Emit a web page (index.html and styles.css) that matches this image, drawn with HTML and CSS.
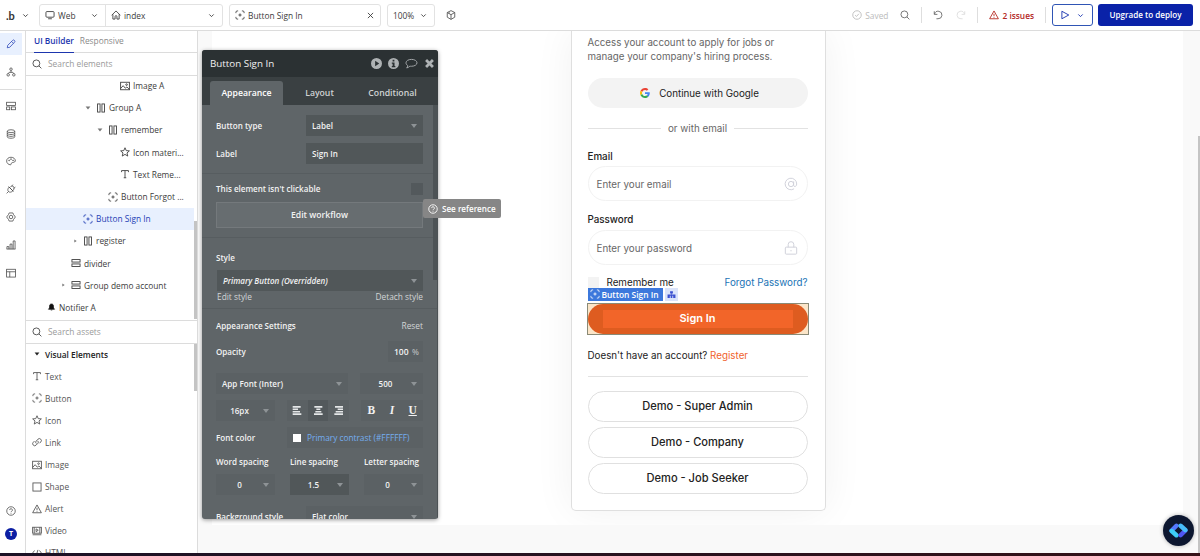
FILE: index.html
```html
<!DOCTYPE html>
<html lang="en">
<head>
  <meta charset="UTF-8">
  <title>index | Editor</title>
  <link rel="stylesheet" href="styles.css">
</head>

<body>
  <!-- Icon sprite -->
  <svg class="sprite">
    <symbol id="i-chevron" viewBox="0 0 16 16"><path d="M3 5.5l5 5 5-5"/></symbol>
    <symbol id="i-screen" viewBox="0 0 16 16"><rect x="1.5" y="2.5" width="13" height="9" rx="1.5"/><path d="M5 14h6"/></symbol>
    <symbol id="i-home" viewBox="0 0 16 16"><path d="M1 8.5L8 1.5l7 7M3 7v7.5h3.5v-4a1.5 1.5 0 0 1 3 0v4H13V7"/></symbol>
    <symbol id="i-button" viewBox="0 0 16 16"><path d="M1.5 5V3.500a2 2 0 0 1 2-2H5M11 1.500h1.500a2 2 0 0 1 2 2V5M14.500 11v1.500a2 2 0 0 1-2 2H11M5 14.500H3.500a2 2 0 0 1-2-2V11M8 5.500v5M5.500 8h5"/></symbol>
    <symbol id="i-close" viewBox="0 0 16 16"><path d="M2 2l12 12M14 2L2 14"/></symbol>
    <symbol id="i-cube" viewBox="0 0 16 16"><path d="M8 1l6 3v7.500L8 15l-6-3.500V4zM2 4l6 3.500L14 4M8 7.500V15M5 5.700V3.500"/></symbol>
    <symbol id="i-check" viewBox="0 0 16 16"><circle cx="8" cy="8" r="6.800"/><path d="M5 8.300l2.200 2L11 6"/></symbol>
    <symbol id="i-search" viewBox="0 0 16 16"><circle cx="7" cy="7" r="5.500"/><path d="M11 11l4 4"/></symbol>
    <symbol id="i-undo" viewBox="0 0 16 16"><path d="M2 2v5h5M2.500 6.500A6 6 0 1 1 8 14H5.500"/></symbol>
    <symbol id="i-redo" viewBox="0 0 16 16"><path d="M14 2v5H9M13.500 6.500A6 6 0 1 0 8 14h2.500"/></symbol>
    <symbol id="i-alert" viewBox="0 0 16 16"><path d="M8 1.500L15 14H1zM8 6v4M8 11.500v1"/></symbol>
    <symbol id="i-play" viewBox="0 0 16 16"><path d="M3 2l11 6-11 6z"/></symbol>
    <symbol id="i-pencil" viewBox="0 0 16 16"><path d="M2 14l.8-4L10.500 2.300a2 2 0 0 1 3 0 2 2 0 0 1 0 3L6 13.200zM9 4l3 3"/></symbol>
    <symbol id="i-tree" viewBox="0 0 16 16"><circle cx="8" cy="3.500" r="2"/><circle cx="3.500" cy="12.500" r="2"/><circle cx="12.500" cy="12.500" r="2"/><path d="M8 5.500V9M3.500 10.500L5 8.500h6l1.500 2"/></symbol>
    <symbol id="i-blocks" viewBox="0 0 16 16"><rect x="1" y="2" width="14" height="5"/><rect x="1" y="9.500" width="5" height="4.500"/><rect x="8.500" y="9.500" width="6.500" height="4.500"/></symbol>
    <symbol id="i-data" viewBox="0 0 16 16"><ellipse cx="8" cy="3.500" rx="6" ry="2.300"/><path d="M2 3.500v9c0 1.300 2.700 2.300 6 2.300s6-1 6-2.300v-9M2 6.500c0 1.300 2.700 2.300 6 2.300s6-1 6-2.300M2 9.500c0 1.300 2.700 2.300 6 2.300s6-1 6-2.300"/></symbol>
    <symbol id="i-palette" viewBox="0 0 16 16"><path d="M8 2C4 2 1 4.500 1 8s3 6 6 6c2 0 1-2 2-3s5 0 6-3c0-3.500-3-6-7-6z"/><circle cx="5" cy="7" r=".7"/><circle cx="8" cy="5" r=".7"/><circle cx="11.300" cy="7" r=".7"/></symbol>
    <symbol id="i-plug" viewBox="0 0 16 16"><path d="M1 15l3-3M4 12c-2-2-1-5 1-7l6 6c-2 2-5 3-7 1zM4 4l8 8M7 4.500C9 3 12 3 12.500 5s0 4-1 5.500M9 3.500L11 1M12.500 7L15 5"/></symbol>
    <symbol id="i-gear" viewBox="0 0 16 16"><path d="M5 1.500h6l1 2.500 3 4-3 4-1 2.500H5L4 12 1 8l3-4z"/><circle cx="8" cy="8" r="2.800"/></symbol>
    <symbol id="i-chart" viewBox="0 0 16 16"><path d="M1.500 14.500v-4h3v4M6.500 14.500V6.500h3v8M11.500 14.500v-13h3v13M1 14.500h14"/></symbol>
    <symbol id="i-layout" viewBox="0 0 16 16"><rect x="1" y="2" width="14" height="12.500"/><path d="M1 6h14M6 6v8.500"/></symbol>
    <symbol id="i-help" viewBox="0 0 16 16"><circle cx="8" cy="8" r="6.800"/><path d="M5.800 6.500a2.200 2.200 0 1 1 3.200 2c-.8.400-1 .8-1 1.500M8 11.300v1"/></symbol>
    <symbol id="i-image" viewBox="0 0 16 16"><rect x="1" y="2" width="14" height="12"/><path d="M1 12l4-4.500 3.500 4 2.500-2 4 4"/><circle cx="10.500" cy="5.800" r="1.300"/></symbol>
    <symbol id="i-cols" viewBox="0 0 16 16"><rect x="2.500" y="1.500" width="4" height="13"/><rect x="9.500" y="1.500" width="4" height="13"/></symbol>
    <symbol id="i-rows" viewBox="0 0 16 16"><rect x="1.500" y="2.500" width="13" height="4"/><rect x="1.500" y="9.500" width="13" height="4"/></symbol>
    <symbol id="i-star" viewBox="0 0 16 16"><path d="M8 1.200l2 4.600 5 .4-3.800 3.300L12.400 14.500 8 11.800l-4.400 2.700 1.200-5L1 6.200l5-.4z"/></symbol>
    <symbol id="i-text" viewBox="0 0 16 16"><path d="M2.500 5V2.500h11V5M8 2.500V14M6 14h4"/></symbol>
    <symbol id="i-bell" viewBox="0 0 16 16"><path d="M8 2c3 0 4 2 4 5v3l2 2.500H2L4 10V7c0-3 1-5 4-5zM6.500 14h3" fill="currentColor"/></symbol>
    <symbol id="i-link" viewBox="0 0 16 16"><path d="M7 10.500a3 3 0 0 1 0-4.500l2.500-2.500a3 3 0 0 1 4.500 4.500L12 10M9 6a3 3 0 0 1 0 4.500L6.500 13A3 3 0 0 1 2 8.500L4 6.500"/></symbol>
    <symbol id="i-shape" viewBox="0 0 16 16"><rect x="1.500" y="1.500" width="13" height="13"/></symbol>
    <symbol id="i-video" viewBox="0 0 16 16"><rect x="1" y="2" width="14" height="9.500"/><path d="M6.500 4.500l3.500 2.300-3.500 2.300zM1 14h14M3.500 2v9.500M12.500 2v9.500"/></symbol>
    <symbol id="i-code" viewBox="0 0 16 16"><path d="M4 4L1 8l3 4M12 4l3 4-3 4M9.500 3l-3 10"/></symbol>
    <symbol id="i-left" viewBox="0 0 16 16"><path d="M1 2.500h12M1 6.200h8M1 9.800h11M1 13.500h13"/></symbol>
    <symbol id="i-center" viewBox="0 0 16 16"><path d="M2 2.500h12M5 6.200h6M3.500 9.800h9M1.500 13.500h13"/></symbol>
    <symbol id="i-right" viewBox="0 0 16 16"><path d="M3 2.500h12M7 6.200h8M4 9.800h11M2 13.500h13"/></symbol>
  </svg>

  <!-- Top bar -->
  <div class="topbar">
    <div class="logo"><span>.b</span><svg class="icon tiny"><use href="#i-chevron"/></svg></div>
    <div class="picker">
      <div class="picker-web"><svg class="icon"><use href="#i-screen"/></svg><span>Web</span><svg class="icon tiny"><use href="#i-chevron"/></svg></div>
      <div class="picker-page"><svg class="icon"><use href="#i-home"/></svg><span>index</span><svg class="icon tiny"><use href="#i-chevron"/></svg></div>
    </div>
    <div class="picker picker-element"><svg class="icon"><use href="#i-button"/></svg><span>Button Sign In</span><svg class="icon tiny"><use href="#i-close"/></svg></div>
    <div class="picker picker-zoom"><span>100%</span><svg class="icon tiny"><use href="#i-chevron"/></svg></div>
    <svg class="icon cube"><use href="#i-cube"/></svg>
    <div class="top-right">
      <div class="saved"><svg class="icon"><use href="#i-check"/></svg>Saved</div>
      <svg class="icon"><use href="#i-search"/></svg>
      <div class="sep"></div>
      <svg class="icon"><use href="#i-undo"/></svg>
      <svg class="icon faded"><use href="#i-redo"/></svg>
      <div class="sep"></div>
      <div class="issues"><svg class="icon"><use href="#i-alert"/></svg>2 issues</div>
      <div class="sep"></div>
      <div class="preview"><svg class="icon"><use href="#i-play"/></svg><svg class="icon tiny"><use href="#i-chevron"/></svg></div>
      <div class="upgrade">Upgrade to deploy</div>
    </div>
  </div>

  <div class="main">
    <!-- Left icon rail -->
    <div class="rail">
      <div class="rail-item active"><svg class="icon"><use href="#i-pencil"/></svg></div>
      <div class="rail-item workflow"><svg class="icon"><use href="#i-tree"/></svg></div>
      <div class="rail-line"></div>
      <div class="rail-item"><svg class="icon"><use href="#i-blocks"/></svg></div>
      <div class="rail-item"><svg class="icon"><use href="#i-data"/></svg></div>
      <div class="rail-item"><svg class="icon"><use href="#i-palette"/></svg></div>
      <div class="rail-item"><svg class="icon"><use href="#i-plug"/></svg></div>
      <div class="rail-item"><svg class="icon"><use href="#i-gear"/></svg></div>
      <div class="rail-item"><svg class="icon"><use href="#i-chart"/></svg></div>
      <div class="rail-item"><svg class="icon"><use href="#i-layout"/></svg></div>
      <div class="rail-bottom">
        <svg class="icon"><use href="#i-help"/></svg>
        <div class="avatar">T</div>
      </div>
    </div>

    <!-- Elements tree + assets -->
    <div class="sidebar">
      <div class="side-tabs">
        <span class="on">UI Builder</span><span>Responsive</span>
      </div>
      <div class="search"><svg class="icon"><use href="#i-search"/></svg>Search elements</div>
      <div class="tree">
        <div class="node d5"><svg class="icon"><use href="#i-image"/></svg>Image A</div>
        <div class="node d3 parent"><i class="down"></i><svg class="icon"><use href="#i-cols"/></svg>Group A</div>
        <div class="node d4 parent"><i class="down"></i><svg class="icon"><use href="#i-cols"/></svg>remember</div>
        <div class="node d5"><svg class="icon"><use href="#i-star"/></svg>Icon materi...</div>
        <div class="node d5"><svg class="icon"><use href="#i-text"/></svg>Text Reme...</div>
        <div class="node d4"><svg class="icon"><use href="#i-button"/></svg>Button Forgot ...</div>
        <div class="node d2 selected"><svg class="icon"><use href="#i-button"/></svg>Button Sign In</div>
        <div class="node d2 parent"><i class="side"></i><svg class="icon"><use href="#i-cols"/></svg>register</div>
        <div class="node d1"><svg class="icon"><use href="#i-rows"/></svg>divider</div>
        <div class="node d1 parent"><i class="side"></i><svg class="icon"><use href="#i-rows"/></svg>Group demo account</div>
        <div class="node d0"><svg class="icon bell"><use href="#i-bell"/></svg>Notifier A</div>
        <div class="thumb tree-thumb"></div>
      </div>
      <div class="search assets-search"><svg class="icon"><use href="#i-search"/></svg>Search assets</div>
      <div class="assets">
        <div class="asset head"><i class="down"></i>Visual Elements</div>
        <div class="asset"><svg class="icon"><use href="#i-text"/></svg>Text</div>
        <div class="asset"><svg class="icon"><use href="#i-button"/></svg>Button</div>
        <div class="asset"><svg class="icon"><use href="#i-star"/></svg>Icon</div>
        <div class="asset"><svg class="icon"><use href="#i-link"/></svg>Link</div>
        <div class="asset"><svg class="icon"><use href="#i-image"/></svg>Image</div>
        <div class="asset"><svg class="icon"><use href="#i-shape"/></svg>Shape</div>
        <div class="asset"><svg class="icon"><use href="#i-alert"/></svg>Alert</div>
        <div class="asset"><svg class="icon"><use href="#i-video"/></svg>Video</div>
        <div class="asset"><svg class="icon"><use href="#i-code"/></svg>HTML</div>
        <div class="thumb asset-thumb"></div>
      </div>
    </div>

    <!-- Canvas -->
    <div class="canvas">
      <div class="page">
        <div class="card">
          <p class="intro">Access your account to apply for jobs or<br>manage your company's hiring process.</p>
          <div class="google">
            <svg class="g-logo" viewBox="0 0 48 48">
              <path fill="#EA4335" d="M24 9.500c3.500 0 6.700 1.200 9.200 3.600l6.900-6.900C35.900 2.400 30.500 0 24 0 14.600 0 6.500 5.400 2.600 13.200l8 6.200C12.400 13.700 17.700 9.500 24 9.500z"/>
              <path fill="#4285F4" d="M47 24.500c0-1.600-.2-3.100-.4-4.500H24v9h12.900c-.6 3-2.300 5.500-4.800 7.200l7.700 6C44.400 38 47 31.800 47 24.500z"/>
              <path fill="#FBBC05" d="M10.500 28.600c-.5-1.500-.8-3-.8-4.600s.3-3.100.8-4.600l-8-6.200C.9 16.500 0 20.100 0 24s.9 7.500 2.600 10.800z"/>
              <path fill="#34A853" d="M24 48c6.500 0 11.900-2.100 15.900-5.800l-7.700-6c-2.200 1.500-4.900 2.300-8.200 2.300-6.300 0-11.600-4.200-13.500-9.900l-8 6.200C6.500 42.600 14.600 48 24 48z"/>
            </svg>
            Continue with Google
          </div>
          <div class="or"><span>or with email</span></div>
          <div class="field-name">Email</div>
          <div class="field">Enter your email
            <svg class="icon" viewBox="0 0 16 16"><circle cx="8" cy="8" r="3"/><path d="M11 5v4.500c0 2 3.500 2 3.500-1.500A6.600 6.600 0 1 0 11.500 13.500"/></svg>
          </div>
          <div class="field-name second">Password</div>
          <div class="field">Enter your password
            <svg class="icon" viewBox="0 0 16 16"><rect x="1.500" y="7" width="13" height="8" rx="1"/><path d="M4.800 7V4a3.200 3.200 0 0 1 6.400 0v3M8 10.300v1.500"/></svg>
          </div>
          <div class="remember">
            <i class="box"></i><span>Remember me</span><a>Forgot Password?</a>
          </div>
          <div class="signin-wrap">
            <div class="badge"><svg class="icon"><use href="#i-button"/></svg>Button Sign In</div>
            <div class="badge-tree"><svg viewBox="0 0 16 16"><path d="M5.500 2h5v4h-2v2H15v6h-4v-4H9.500v4h-3v-4H5v4H1V8h6.500V6h-2z"/></svg></div>
            <div class="signin"><span>Sign In</span></div>
          </div>
          <div class="register">Doesn't have an account? <a>Register</a></div>
          <div class="rule"></div>
          <div class="demo">Demo - Super Admin</div>
          <div class="demo">Demo - Company</div>
          <div class="demo">Demo - Job Seeker</div>
        </div>
      </div>
      <div class="thumb page-thumb"></div>
    </div>
  </div>
  <div class="taskbar"></div>

  <!-- Floating property editor -->
  <div class="editor">
    <div class="editor-head">
      <span>Button Sign In</span>
      <svg viewBox="0 0 16 16"><path fill-rule="evenodd" d="M8 0a8 8 0 1 0 0 16A8 8 0 0 0 8 0zM6 4l6 4-6 4z"/></svg>
      <svg viewBox="0 0 16 16"><path fill-rule="evenodd" d="M8 0a8 8 0 1 0 0 16A8 8 0 0 0 8 0zM6.700 2.500h2.600V5H6.700zM5.500 6.500h4v5h1.200v1.800H5.500v-1.800h1.200V8.300H5.500z"/></svg>
      <svg class="bubble" viewBox="0 0 18 16"><path d="M9 2c4.500 0 8 2.200 8 5s-3.500 5-8 5c-1 0-1.500 0-2.300-.2C5.500 13 4 14 2 14.500c1-1 1.500-2 1.500-3.500C2 10 1 8.700 1 7c0-2.800 3.500-5 8-5z"/></svg>
      <svg class="cross" viewBox="0 0 16 16"><path d="M3 3l10 10M13 3L3 13"/></svg>
    </div>
    <div class="editor-tabs"><span class="on">Appearance</span><span>Layout</span><span>Conditional</span></div>
    <div class="editor-body">
      <div class="row type"><label>Button type</label><div class="input w116">Label<i class="down"></i></div></div>
      <div class="row"><label>Label</label><div class="input w116">Sign In</div></div>
      <div class="group click">
        <div class="row"><label>This element isn't clickable</label><i class="check"></i></div>
        <div class="workflow-btn">Edit workflow</div>
      </div>
      <div class="group style">
        <label>Style</label>
        <div class="input italic">Primary Button (Overridden)<i class="down"></i></div>
        <div class="links"><span>Edit style</span><span>Detach style</span></div>
      </div>
      <div class="group settings">
        <div class="row"><label>Appearance Settings</label><span class="reset">Reset</span></div>
        <div class="row opacity"><label>Opacity</label><div class="input soft">100 <small>%</small></div></div>
        <div class="row fonts"><div class="input soft w131">App Font (Inter)<i class="down"></i></div><div class="input soft w62 mid">500<i class="down"></i></div></div>
        <div class="row fonts">
          <div class="input soft w58 mid">16px<i class="down"></i></div>
          <div class="seg"><svg><use href="#i-left"/></svg><svg class="on"><use href="#i-center"/></svg><svg><use href="#i-right"/></svg></div>
          <div class="seg biu"><b>B</b><b class="it">I</b><b class="un">U</b></div>
        </div>
        <div class="row fonts"><label>Font color</label><div class="input soft color"><i class="swatch"></i>Primary contrast (#FFFFFF)</div></div>
        <div class="spacing">
          <div><label>Word spacing</label><div class="input soft mid">0<i class="down"></i></div></div>
          <div><label>Line spacing</label><div class="input mid">1.5<i class="down"></i></div></div>
          <div><label>Letter spacing</label><div class="input soft mid">0<i class="down"></i></div></div>
        </div>
        <div class="row background"><label>Background style</label><div class="input soft w116">Flat color<i class="down"></i></div></div>
      </div>
      <div class="thumb editor-thumb"></div>
    </div>
  </div>
  <div class="tooltip"><svg class="icon"><use href="#i-help"/></svg>See reference</div>

  <!-- Chat widget -->
  <div class="chat">
    <svg viewBox="0 0 20 14">
      <path d="M8 2.500L3.500 7" stroke="#5478ff"/>
      <path d="M3.500 7.500L8 11.500" stroke="#3ecdf6"/>
      <path d="M16.500 7L12 11.500" stroke="#4f55f2"/>
      <path d="M12 2.500L16.500 6.500" stroke="#48bdfb"/>
    </svg>
  </div>
</body>
</html>
```

FILE: styles.css
```css
* {
  box-sizing: border-box;
}

body {
  margin: 0;
  height: 556px;
  display: flex;
  flex-direction: column;
  overflow: hidden;
  background: #fff;
  color: #3c3c3c;
  font-family: "Open Sans", sans-serif;
  font-size: 8.35px;
  white-space: nowrap;
}

.sprite {
  position: absolute;
  width: 0;
  height: 0;
}

.icon {
  width: 10px;
  height: 10px;
  flex: none;
  fill: none;
  stroke: currentColor;
  stroke-width: 1.4;
}

.tiny {
  width: 7px;
  height: 7px;
  stroke-width: 2;
}

i.down {
  border: 3px solid transparent;
  border-top: 4px solid currentColor;
  border-bottom: 0;
}

i.side {
  border: 2px solid transparent;
  border-left: 3px solid currentColor;
  border-right: 0;
}

.thumb {
  position: absolute;
  right: 0;
  width: 3px;
  background: #c4c4c4;
}

/* Top bar */
.topbar {
  height: 31px;
  flex: none;
  display: flex;
  align-items: center;
  border-bottom: 1px solid #dcdcdc;
}

.logo {
  width: 39px;
  padding-left: 6px;
  display: flex;
  align-items: center;
  gap: 7px;
  font: bold 11px Lato, sans-serif;
  color: #333;
}

.picker {
  height: 23px;
  display: flex;
  border: 1px solid #e2e2e2;
  border-radius: 3px;
}

.picker-web,
.picker-page {
  display: flex;
  align-items: center;
  gap: 3px;
  padding: 0 7px 0 5px;
}

.picker-web {
  width: 66px;
  border-right: 1px solid #e2e2e2;
}

.picker-page {
  width: 116px;
}

.picker span {
  flex: 1;
}

.picker-element {
  width: 152px;
  margin-left: 6px;
  padding: 0 6px 0 5px;
  align-items: center;
  gap: 3px;
}

.picker-zoom {
  width: 48px;
  margin-left: 6px;
  padding: 0 7px 0 5px;
  align-items: center;
}

.cube {
  margin-left: 11px;
  color: #555;
}

.top-right {
  margin-left: auto;
  padding-right: 7px;
  display: flex;
  align-items: center;
  color: #666;
}

.saved {
  display: flex;
  align-items: center;
  gap: 3px;
  margin-right: 12px;
  color: #bbb;
}

.sep {
  width: 1px;
  height: 16px;
  margin: 0 11px;
  background: #dedede;
}

.faded {
  margin-left: 13px;
  color: #ddd;
}

.issues {
  display: flex;
  align-items: center;
  gap: 3px;
  color: #b3261e;
  font-weight: 600;
}

.preview {
  width: 41px;
  height: 22px;
  margin: 0 5px 0 -5px;
  padding: 0 8px 0 7px;
  display: flex;
  align-items: center;
  justify-content: space-between;
  border: 1px solid #2f55b5;
  border-radius: 3px;
  color: #0f2bab;
}

.upgrade {
  width: 95px;
  height: 22px;
  line-height: 22px;
  border-radius: 3px;
  background: #0a22a8;
  color: #fff;
  text-align: center;
  font-weight: 600;
  font-size: 8.1px;
}

.main {
  flex: 1;
  min-height: 0;
  display: flex;
}

/* Icon rail */
.rail {
  width: 26px;
  padding-top: 2px;
  display: flex;
  flex-direction: column;
  border-right: 1px solid #dcdcdc;
  color: #444;
}

.rail .icon {
  stroke-width: 1.2;
}

.rail-item {
  width: 22px;
  height: 27.800px;
  display: flex;
  align-items: center;
  justify-content: center;
}

.rail-item.active {
  height: 22px;
  background: #e8f0fe;
  color: #2440b5;
}

.rail-item.workflow {
  height: 34px;
}

.rail-line {
  height: 1px;
  width: 22px;
  margin-bottom: 2px;
  background: #dcdcdc;
}

.rail-bottom {
  width: 22px;
  margin-top: auto;
  padding-bottom: 13px;
  display: flex;
  flex-direction: column;
  align-items: center;
  gap: 12px;
}

.avatar {
  width: 12px;
  height: 12px;
  line-height: 12px;
  border-radius: 50%;
  background: #0c1fa3;
  color: #fff;
  font-size: 7px;
  font-weight: bold;
  text-align: center;
}

/* Sidebar */
.sidebar {
  width: 172px;
  display: flex;
  flex-direction: column;
  border-right: 1px solid #dcdcdc;
}

.side-tabs {
  height: 22px;
  padding-left: 8px;
  display: flex;
  gap: 6px;
  line-height: 20px;
  border-bottom: 1px solid #dcdcdc;
  color: #8a8a8a;
}

.side-tabs .on {
  height: 22px;
  border-bottom: 1px solid #1d36ae;
  color: #1d36ae;
  font-weight: 600;
  font-size: 8.3px;
}

.search {
  height: 23px;
  padding: 0 0 1px 6px;
  display: flex;
  align-items: center;
  gap: 6px;
  border-bottom: 1px solid #dcdcdc;
  color: #9a9a9a;
}

.search .icon {
  color: #444;
}

.tree {
  position: relative;
  height: 244px;
  margin-top: -1px;
}

.node {
  height: 22.200px;
  padding-bottom: 1px;
  display: flex;
  align-items: center;
  gap: 3px;
  position: relative;
}

.node i {
  margin-right: 2px;
  color: #777;
  transform: scale(.8);
}

.d0 { padding-left: 20px; }
.d1 { padding-left: 45px; }
.d2 { padding-left: 57px; }
.d3 { padding-left: 70px; }
.d4 { padding-left: 82px; }
.d5 { padding-left: 94px; }
.d1.parent { padding-left: 36px; }
.d2.parent { padding-left: 48px; }
.d3.parent { padding-left: 59px; }
.d4.parent { padding-left: 71px; }

.node i.side {
  margin-right: 3px;
}

.node.selected {
  margin-right: 3px;
  background: #e8f0fe;
  color: #2440b5;
}

.bell {
  width: 9px;
  height: 8px;
  margin-left: 1px;
  color: #111;
}

.tree-thumb {
  top: 146px;
  height: 98px;
}

.assets-search {
  height: 24px;
  margin-top: 1px;
  border-top: 1px solid #dcdcdc;
}

.assets {
  position: relative;
  flex: 1;
  overflow: hidden;
}

.asset {
  height: 22.100px;
  padding-left: 6px;
  padding-bottom: 2px;
  display: flex;
  align-items: center;
  gap: 3px;
  color: #555;
}

.asset.head {
  padding-left: 8px;
  gap: 5px;
  font-weight: 600;
  font-size: 8.3px;
  color: #222;
}

.asset.head i {
  transform: scale(.8);
}

.asset-thumb {
  top: 0;
  height: 47px;
}

/* Canvas */
.canvas {
  position: relative;
  flex: 1;
  overflow: hidden;
  padding: 0 17px 0 14px;
  background: #f9f9f9;
}

.page {
  height: 494px;
  display: flex;
  justify-content: center;
  background: #fff;
  overflow: hidden;
}

.page-thumb {
  top: 105px;
  bottom: 0;
  width: 2px;
}

.card {
  width: 255px;
  height: 480px;
  margin-left: 1px;
  padding: 0 17px 0 16px;
  border: 1px solid #dfdfdf;
  border-top: 0;
  border-radius: 0 0 5px 5px;
  background: #fff;
  box-shadow: 0 0 40px rgba(0, 0, 0, .06);
  color: #222;
  font-family: Inter, sans-serif;
  font-size: 9.8px;
}

.intro {
  margin: 5px 0 14px;
  line-height: 14px;
  color: #666;
  font-size: 9.75px;
}

.google {
  height: 30px;
  padding-left: 4px;
  display: flex;
  align-items: center;
  justify-content: center;
  gap: 9px;
  border-radius: 15px;
  background: #f3f3f3;
}

.g-logo {
  width: 10px;
  height: 10px;
}

.or {
  margin: 13px 0 14px;
  height: 14px;
  display: flex;
  align-items: center;
  gap: 7px;
  color: #666;
}

.or::before,
.or::after {
  content: "";
  flex: 1;
  height: 1px;
  background: #e2e2e2;
}

.field-name {
  height: 17px;
  line-height: 16px;
  font-weight: 500;
}

.field-name.second {
  margin-top: 11px;
  height: 18px;
}

.field {
  height: 35px;
  padding: 1px 9px 0 8px;
  display: flex;
  align-items: center;
  justify-content: space-between;
  border: 1px solid #f2f2f2;
  border-radius: 18px;
  color: #666;
}

.field .icon {
  width: 14px;
  height: 14px;
  stroke-width: 1.1;
  color: #cfd0da;
}

.remember {
  margin-top: 10px;
  height: 14px;
  display: flex;
  align-items: center;
}

.remember .box {
  width: 11px;
  height: 11px;
  margin-right: 8px;
  background: #f3f3f3;
}

.remember a {
  margin-left: auto;
  color: #1a73b5;
}

.signin-wrap {
  position: relative;
  margin: 14px -1px 0;
  height: 32px;
  border: 1px solid #8a8a76;
  background: #fbe5c8;
}

.signin {
  height: 30px;
  padding: 6px 15px;
  border-radius: 15px;
  background: #de5c20;
}

.signin span {
  display: block;
  height: 18px;
  line-height: 17px;
  background: #f26529;
  color: #fff;
  text-align: center;
  font-size: 11px;
  font-weight: 600;
}

.badge {
  position: absolute;
  left: 0;
  top: -16px;
  width: 75px;
  height: 13px;
  padding: 0 0 1px 2px;
  display: flex;
  align-items: center;
  gap: 2px;
  background: #3c78dc;
  color: #fff;
  font: 600 8.4px "Open Sans", sans-serif;
}

.badge-tree {
  position: absolute;
  left: 77px;
  top: -16px;
  width: 13px;
  height: 13px;
  padding: 2px;
  background: #d9e3fa;
}

.badge-tree svg {
  display: block;
  width: 9px;
  height: 9px;
  fill: #3a50d0;
}

.register {
  margin-top: 13px;
  height: 14px;
  line-height: 15px;
}

.register a {
  color: #f0622d;
}

.rule {
  margin: 14px 0;
  height: 1px;
  background: #e2e2e2;
}

.demo {
  height: 31px;
  line-height: 28px;
  margin-bottom: 5px;
  border: 1px solid #e0e0e0;
  border-radius: 16px;
  text-align: center;
  font-size: 11.1px;
  font-weight: 500;
}

.taskbar {
  height: 3px;
  flex: none;
  background: linear-gradient(90deg, #1b1226, #351318);
}

/* Property editor */
.editor {
  position: absolute;
  left: 202px;
  top: 50px;
  width: 236px;
  height: 469px;
  display: flex;
  flex-direction: column;
  overflow: hidden;
  border-radius: 3px;
  background: #5f6568;
  box-shadow: 0 1px 4px rgba(0, 0, 0, .4);
  color: #f2f2f2;
  font-size: 8.05px;
  font-weight: 600;
}

.editor-head {
  height: 27px;
  flex: none;
  padding: 0 3px 0 8px;
  display: flex;
  align-items: center;
  gap: 6px;
  background: #2b3133;
  font-size: 9.8px;
  font-weight: 400;
}

.editor-head span {
  flex: 1;
}

.editor-head svg {
  width: 11px;
  height: 11px;
  fill: #aeb2b4;
}

.editor-head .bubble {
  width: 13px;
  fill: none;
  stroke: #aeb2b4;
  stroke-width: 1.3;
}

.editor-head .cross {
  stroke: #aeb2b4;
  stroke-width: 4;
}

.editor-tabs {
  height: 28px;
  flex: none;
  padding: 4px 0 0 8px;
  display: flex;
  background: #3a4042;
  line-height: 24px;
  text-align: center;
  color: #d0d3d4;
  font-size: 8.7px;
}

.editor-tabs span {
  width: 73px;
}

.editor-tabs .on {
  border-radius: 3px 3px 0 0;
  background: #5f6568;
  color: #fff;
}

.editor-body {
  position: relative;
  flex: 1;
  min-height: 0;
  overflow: hidden;
  padding-top: 10px;
  border-right: 1px solid #4c5255;
}

.row {
  height: 21px;
  margin: 0 14px;
  display: flex;
  align-items: center;
  justify-content: space-between;
}

.row label {
  padding-bottom: 1px;
}

.row.type {
  margin-bottom: 7px;
}

.input {
  position: relative;
  height: 21px;
  padding: 0 6px;
  display: flex;
  align-items: center;
  justify-content: space-between;
  background: #515759;
}

.input.soft {
  background: #5b6164;
}

.input i.down {
  color: #8e9396;
}

.input.mid {
  padding-left: 0;
}

.input.mid::before {
  content: "";
}

.w116 { width: 117px; }
.w131 { width: 132px; }
.w62 { width: 63px; }
.w58 { width: 59px; }

.group {
  border-top: 1px solid #575d60;
}

.click {
  margin-top: 9px;
  height: 64px;
  padding-top: 4px;
}

.check {
  width: 12px;
  height: 12px;
  background: #53595c;
}

.workflow-btn {
  height: 26px;
  line-height: 24px;
  margin: 3px 14px 0;
  border: 1px solid #74797c;
  background: #676d70;
  text-align: center;
  font-size: 8.600px;
}

.style {
  height: 71px;
  padding: 14px 14px 0;
}

.style label {
  display: block;
  height: 18px;
  line-height: 12px;
}

.style .input {
  margin-left: 1px;
}

.italic {
  font-style: italic;
}

.links {
  margin-left: 1px;
  display: flex;
  justify-content: space-between;
  line-height: 12px;
  color: #d2d5d6;
  font-size: 8.35px;
  font-weight: 400;
}

.settings {
  padding-top: 6px;
}

.reset {
  color: #d2d5d6;
  font-size: 8.35px;
  font-weight: 400;
}

.opacity {
  margin-top: 5px;
  margin-bottom: 11px;
}

.opacity .input {
  width: 35px;
  padding: 0 4px 0 6px;
  font-size: 8.5px;
}

.opacity small {
  color: #b0b4b6;
  font-size: 8px;
}

.fonts {
  margin-bottom: 6px;
}

.seg {
  width: 62px;
  height: 21px;
  display: flex;
  background: #5b6164;
}

.seg svg,
.seg b {
  width: 21px;
  height: 21px;
  padding: 5px;
  stroke: #e4e6e7;
  stroke-width: 2.4;
}

.seg svg.on {
  background: #53595c;
}

.seg b {
  padding: 0;
  font: bold 11.5px/20px "Liberation Serif", serif;
  text-align: center;
}

.seg .it {
  font-style: italic;
}

.seg .un {
  text-decoration: underline;
}

.color {
  width: 136px;
  gap: 6px;
  justify-content: flex-start;
  color: #74aef0;
  font-size: 8.3px;
  font-weight: 400;
}

.swatch {
  width: 8px;
  height: 8px;
  background: #fff;
}

.spacing {
  margin: 8px 14px 11px;
  display: flex;
  justify-content: space-between;
}

.spacing > div {
  width: 59px;
}

.spacing label {
  display: block;
  height: 18px;
  line-height: 12px;
}

.editor-thumb {
  top: 0;
  width: 4px;
  height: 175px;
  background: #4d5356;
}

.tooltip {
  position: absolute;
  left: 423px;
  top: 199px;
  width: 78px;
  height: 19px;
  padding-left: 5px;
  display: flex;
  align-items: center;
  gap: 4px;
  border-radius: 2px;
  background: #868686;
  color: #fff;
  font-size: 8.1px;
  font-weight: 600;
}

.chat {
  position: absolute;
  left: 1163px;
  top: 515px;
  width: 31px;
  height: 31px;
  display: flex;
  align-items: center;
  justify-content: center;
  border-radius: 50%;
  background: #0d1730;
  box-shadow: 0 0 4px rgba(0, 0, 0, .3);
}

.chat svg {
  width: 21px;
  height: 15px;
  fill: none;
  stroke-width: 4.3;
  stroke-linecap: round;
}
```
